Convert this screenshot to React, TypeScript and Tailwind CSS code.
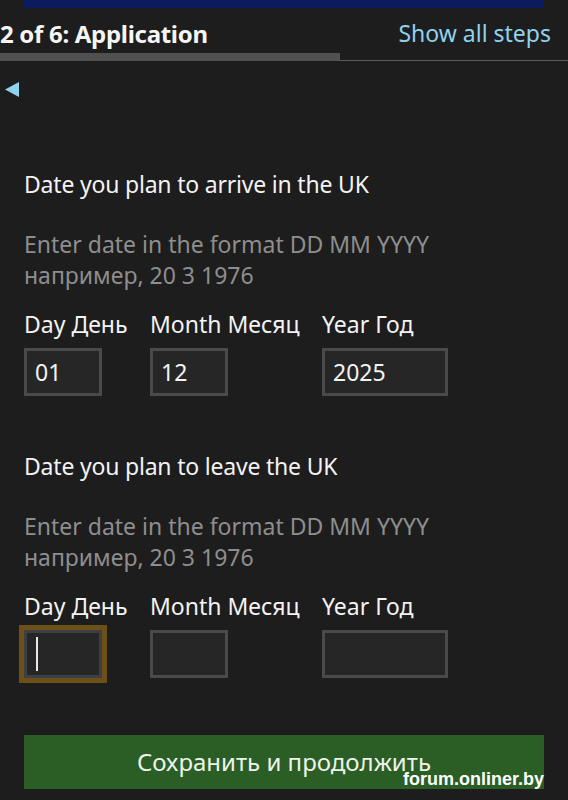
import React from "react";

function DateGroup({
  title,
  values,
  focused,
}: {
  title: string;
  values: [string, string, string];
  focused?: boolean;
}) {
  return (
    <div className="flex flex-col">
      <div className="text-[23px] leading-[30px] tracking-[-0.2px] text-[#f3f3f3]">{title}</div>
      <div className="mt-[30px] text-[23px] leading-[31px] text-[#8e8e8e]">
        <div>Enter date in the format DD MM YYYY</div>
        <div>например, 20 3 1976</div>
      </div>
      <div className="mt-[18px] flex items-start">
        <div className="flex w-[126px] flex-col">
          <div className="text-[23px] leading-[30px] text-[#f3f3f3]">Day День</div>
          <div className="mt-[9px] h-[48px] w-[78px]">
            {focused ? (
              <div className="-m-[5px] h-[58px] w-[88px] border-[5px] border-[#6e4f17]">
                <div className="flex h-full w-full items-center border-[3px] border-[#3b4045] bg-[#262626] pl-[9px]">
                  <div className="h-[34px] w-[2px] bg-[#e8e8e8]" />
                </div>
              </div>
            ) : (
              <div className="flex h-full w-full items-center border-[3px] border-[#4a4a4a] bg-[#262626] pl-[8px] text-[23px] text-[#f3f3f3]">
                {values[0]}
              </div>
            )}
          </div>
        </div>
        <div className="flex w-[172px] flex-col">
          <div className="text-[23px] leading-[30px] text-[#f3f3f3]">Month Месяц</div>
          <div className="mt-[9px] flex h-[48px] w-[78px] items-center border-[3px] border-[#4a4a4a] bg-[#262626] pl-[8px] text-[23px] text-[#f3f3f3]">
            {values[1]}
          </div>
        </div>
        <div className="flex flex-col">
          <div className="text-[23px] leading-[30px] text-[#f3f3f3]">Year Год</div>
          <div className="mt-[9px] flex h-[48px] w-[126px] items-center border-[3px] border-[#4a4a4a] bg-[#262626] pl-[8px] text-[23px] text-[#f3f3f3]">
            {values[2]}
          </div>
        </div>
      </div>
    </div>
  );
}

export default function App() {
  return (
    <div
      className="relative h-[800px] w-[568px] overflow-hidden bg-[#1d1d1d]"
      style={{ fontFamily: '"Noto Sans", "Open Sans", sans-serif' }}
    >
      <div className="mx-[24px] h-[8px] bg-[#0b1c5e]" />
      <div className="flex h-[45px] items-center justify-between pr-[17px] pt-[6px]">
        <div className="text-[24px] font-bold tracking-[-0.3px] text-[#f5f5f5]">2 of 6: Application</div>
        <div className="text-[23px] text-[#8fd2ee]">Show all steps</div>
      </div>
      <div className="flex items-end">
        <div className="h-[8px] w-[340px] bg-[#505050]" />
        <div className="h-[1px] flex-1 bg-[#5c5c5c]" />
      </div>
      <div className="mt-[21px] pl-[5px]">
        <svg width="14" height="15" viewBox="0 0 14 15">
          <polygon points="14,0 14,15 0,7.5" fill="#8fd2ee" />
        </svg>
      </div>
      <div className="mt-[72px] px-[24px]">
        <DateGroup title="Date you plan to arrive in the UK" values={["01", "12", "2025"]} />
        <div className="mt-[55px]">
          <DateGroup title="Date you plan to leave the UK" values={["", "", ""]} focused />
        </div>
        <div className="mt-[57px] flex h-[54px] items-center justify-center bg-[#2a5e25] text-[24px] text-[#eef3ec]">
          Сохранить и продолжить
        </div>
      </div>
      <div
        className="absolute left-[403px] top-[766px] text-[18px] font-bold text-white"
        style={{ fontFamily: '"Liberation Sans", Arial, sans-serif' }}
      >
        forum.onliner.by
      </div>
    </div>
  );
}
